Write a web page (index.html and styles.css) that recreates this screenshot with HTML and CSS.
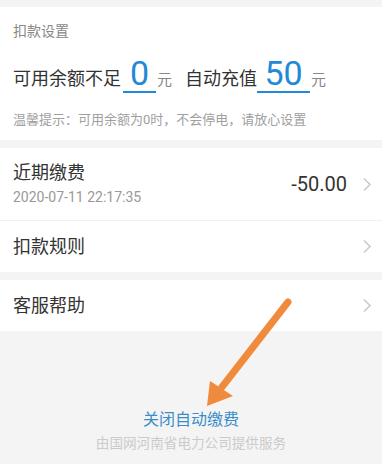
FILE: index.html
```html
<!DOCTYPE html>
<html lang="zh-CN">
<head>
    <meta charset="UTF-8">
    <title>自动缴费</title>
    <link rel="stylesheet" href="styles.css">
</head>
<body>
    <div class="page">
        <!-- 扣款设置 -->
        <div class="card setting">
            <div class="setting-title">扣款设置</div>
            <div class="amount-row">
                <span class="label">可用余额不足</span>
                <span class="field field-min">0</span>
                <span class="unit">元</span>
                <span class="label label-gap">自动充值</span>
                <span class="field field-max">50</span>
                <span class="unit">元</span>
            </div>
            <div class="tip">温馨提示：可用余额为0时，不会停电，请放心设置</div>
        </div>

        <div class="card">
            <div class="cell cell-tall">
                <div class="cell-main">
                    <div class="cell-title">近期缴费</div>
                    <div class="cell-sub">2020-07-11 22:17:35</div>
                </div>
                <div class="cell-value">-50.00</div>
                <svg class="arrow-right" width="10" height="15" viewBox="0 0 10 15"><path d="M2 1.5 L8 7.5 L2 13.5" fill="none" stroke="#c9c9c9" stroke-width="1.5"/></svg>
            </div>
            <div class="cell">
                <div class="cell-main">
                    <div class="cell-title">扣款规则</div>
                </div>
                <svg class="arrow-right" width="10" height="15" viewBox="0 0 10 15"><path d="M2 1.5 L8 7.5 L2 13.5" fill="none" stroke="#c9c9c9" stroke-width="1.5"/></svg>
            </div>
        </div>

        <div class="card">
            <div class="cell">
                <div class="cell-main">
                    <div class="cell-title">客服帮助</div>
                </div>
                <svg class="arrow-right" width="10" height="15" viewBox="0 0 10 15"><path d="M2 1.5 L8 7.5 L2 13.5" fill="none" stroke="#c9c9c9" stroke-width="1.5"/></svg>
            </div>
        </div>

        <div class="bottom">
            <div class="close-btn">关闭自动缴费</div>
            <div class="footer">由国网河南省电力公司提供服务</div>
        </div>

        <!-- 标注箭头 -->
        <svg class="mark" width="382" height="464" viewBox="0 0 382 464">
            <line x1="288" y1="302" x2="222" y2="387" stroke="#f08a3c" stroke-width="7" stroke-linecap="round"/>
            <polygon points="207,406 210,381 233,396" fill="#f08a3c"/>
        </svg>
    </div>
</body>
</html>
```

FILE: styles.css
```css
* {
    margin: 0;
    padding: 0;
    box-sizing: border-box;
}
html, body {
    background: #f4f4f4;
}
body {
    font-family: "Roboto", "Noto Sans CJK SC", sans-serif;
    color: #333;
    width: 382px;
    height: 464px;
    overflow: hidden;
}
.page {
    position: relative;
    height: 464px;
    padding-top: 7px;
}
.card {
    background: #fff;
    margin-bottom: 8px;
}
.setting {
    padding: 14px 13px 11px;
}
.setting-title {
    font-size: 14px;
    line-height: 20px;
    color: #888;
}
.amount-row {
    display: flex;
    align-items: baseline;
    margin-top: 14px;
}
.label {
    font-size: 18px;
    line-height: 24px;
    color: #333;
}
.label-gap {
    margin-left: 13px;
}
.field {
    display: inline-block;
    font-size: 34px;
    line-height: 36px;
    color: #2389d6;
    text-align: center;
    border-bottom: 2px solid #2389d6;
    margin-left: 2px;
}
.field-min {
    width: 33px;
}
.field-max {
    width: 53px;
    margin-left: 0;
}
.unit {
    font-size: 15px;
    line-height: 20px;
    color: #888;
    margin-left: 1px;
}
.tip {
    margin-top: 18px;
    font-size: 13px;
    line-height: 18px;
    color: #a0a0a0;
}
.cell {
    display: flex;
    align-items: center;
    height: 51px;
    padding: 0 10px 0 13px;
}
.cell-tall {
    height: 73px;
    border-bottom: 1px solid #f0f0f0;
}
.cell-main {
    flex: 1;
}
.cell-title {
    font-size: 18px;
    line-height: 24px;
}
.cell-sub {
    font-size: 14px;
    line-height: 20px;
    color: #999;
    margin-top: 2px;
}
.cell-value {
    font-size: 20px;
    color: #333;
    margin-right: 15px;
}
.arrow-right {
    display: block;
}
.bottom {
    padding-top: 70px;
    text-align: center;
}
.close-btn {
    font-size: 16px;
    line-height: 22px;
    color: #3a8dc8;
}
.footer {
    font-size: 13.6px;
    line-height: 18px;
    color: #cbcbcb;
    margin-top: 3px;
}
.mark {
    position: absolute;
    left: 0;
    top: 0;
    pointer-events: none;
}
```
